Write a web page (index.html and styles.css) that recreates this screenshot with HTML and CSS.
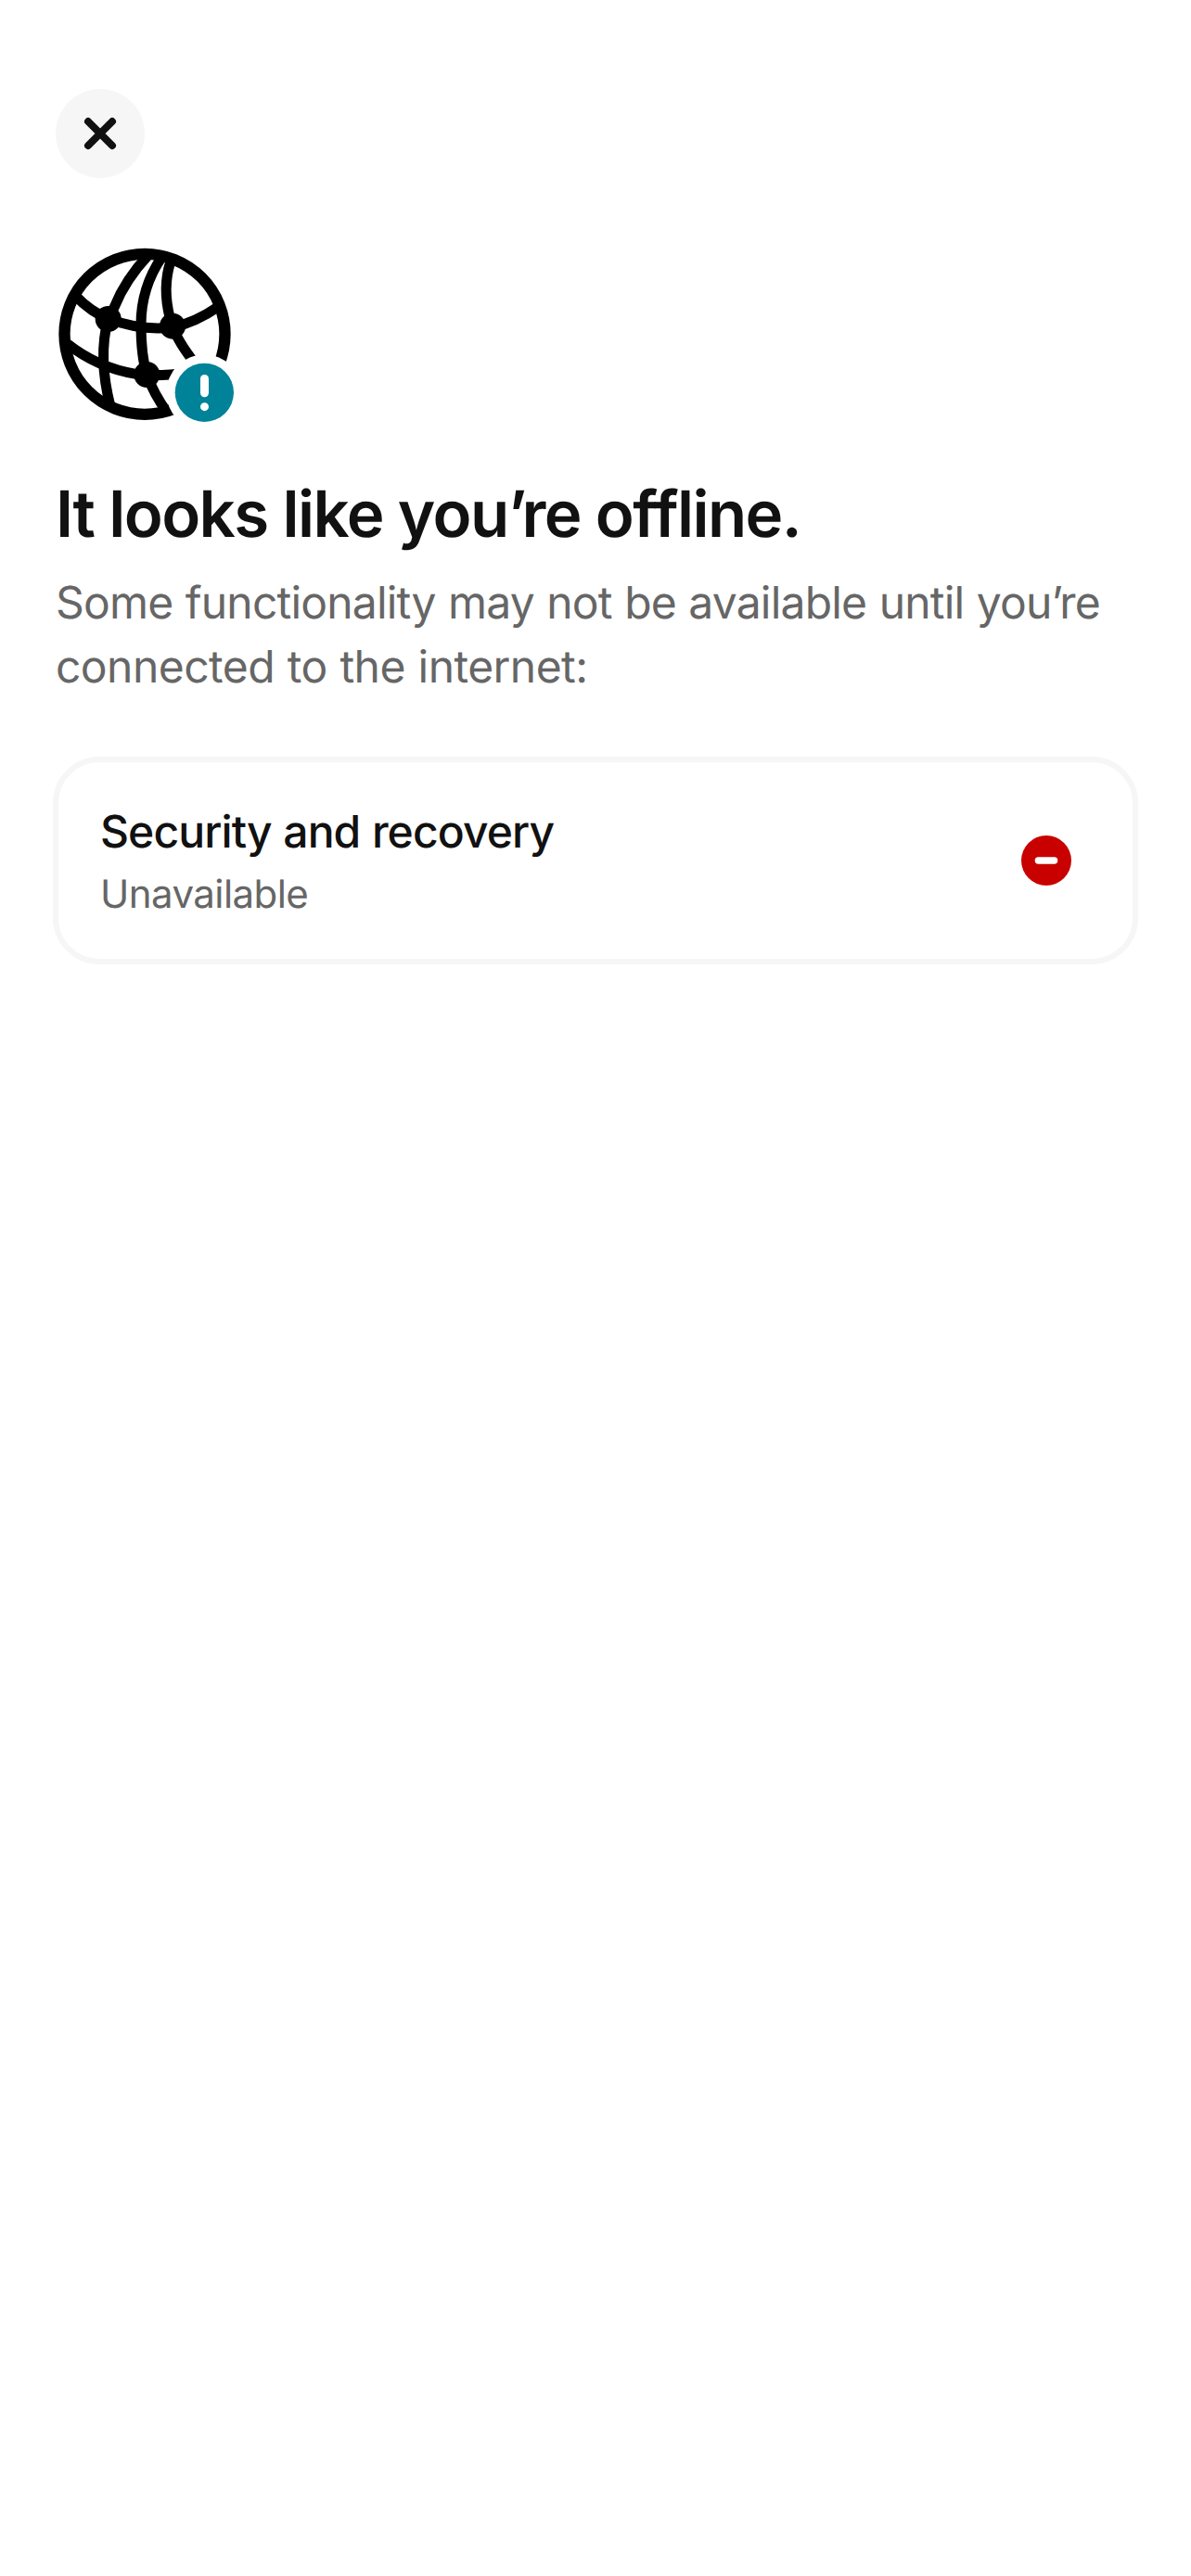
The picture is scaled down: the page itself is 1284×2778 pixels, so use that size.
FILE: index.html
```html
<!DOCTYPE html>
<html lang="en">
<head>
<meta charset="utf-8">
<title>Offline</title>
<link rel="stylesheet" href="styles.css">
</head>
<body>
<main class="screen">
  <button class="close" aria-label="Close">
    <svg class="close-icon" viewBox="0 0 96 96"><path d="M35 35 61 61M61 35 35 61"/></svg>
  </button>
  <svg class="globe" viewBox="30 15 660 630" aria-hidden="true">
    <defs>
      <mask id="badge-gap" maskUnits="userSpaceOnUse" x="0" y="0" width="690" height="645">
        <rect width="690" height="645" fill="#fff"/>
        <circle cx="511" cy="505" r="123" fill="#000"/>
      </mask>
    </defs>
    <g mask="url(#badge-gap)">
      <g class="globe-lines">
        <circle class="rim" cx="318" cy="316" r="259.5"/>
        <path d="M330 60Q255 140 220 228L200 266Q166 390 207 550"/>
        <path d="M374 66Q306 165 306 285Q306 385 325 447Q345 505 392 572"/>
        <path d="M402 80Q374 165 400 265L408 290Q425 340 480 410"/>
        <path d="M92 190Q145 245 200 266Q305 306 408 294Q482 278 556 227"/>
        <path d="M65 345Q165 425 290 445L325 450Q370 450 430 445"/>
      </g>
      <circle cx="200" cy="267" r="42"/>
      <circle cx="408" cy="290" r="42"/>
      <circle cx="325" cy="447" r="42"/>
    </g>
    <circle class="badge" cx="511" cy="505" r="95"/>
    <rect class="mark" x="498" y="447" width="27" height="73" rx="13.5"/>
    <circle class="mark" cx="511.500" cy="551" r="13.500"/>
  </svg>
  <h1 class="title">It looks like you<span class="apostrophe">’</span>re offline.</h1>
  <p class="lead"><span class="lead-first">Some functionality may not be available until you<span class="apostrophe">’</span>re</span><br>connected to the internet:</p>
  <section class="card">
    <div class="card-text">
      <h2 class="card-title">Security and recovery</h2>
      <p class="card-status">Unavailable</p>
    </div>
    <svg class="status-icon" viewBox="0 0 54 54" aria-label="Unavailable"><circle cx="27" cy="27" r="27"/><rect x="14.700" y="23.300" width="24.600" height="7.400" rx="3.700"/></svg>
  </section>
</main>
</body>
</html>
```
FILE: styles.css
```css
* { box-sizing: border-box; }
body { margin: 0; background: #fff; color: #111; font-family: Inter, sans-serif; text-rendering: geometricPrecision; }
.screen { display: flex; flex-direction: column; align-items: flex-start; min-height: 2778px; padding: 96px 57px 0 60px; }
.close { width: 96px; height: 96px; padding: 0; border: 0; border-radius: 50%; background: #f6f6f6; }
.close-icon { display: block; width: 96px; height: 96px; fill: none; stroke: #111; stroke-width: 8; stroke-linecap: round; }
.globe { width: 220px; height: 210px; margin-top: 68px; }
.globe-lines { fill: none; stroke: #000; stroke-width: 33; }
.globe-lines .rim { stroke-width: 37; }
.badge { fill: #008299; }
.mark { fill: #fff; }
.title { margin: 39px 0 0; font-size: 69px; line-height: 90px; font-weight: 600; letter-spacing: -1.56px; }
.title .apostrophe { letter-spacing: -5.5px; }
.lead { margin: 16px 0 0; color: #666; font-size: 48px; line-height: 69px; white-space: nowrap; letter-spacing: -0.55px; word-spacing: 0.8px; }
.lead-first { letter-spacing: -0.8px; word-spacing: 0.7px; }
.lead .apostrophe { letter-spacing: -3.8px; }
.card { display: flex; align-items: center; justify-content: space-between; width: 1170px; height: 224px; margin: 63px 0 0 -3px; padding: 0 66px 0 45px; border: 6px solid #f6f6f6; border-radius: 50px; }
.card-title { margin: 0; font-size: 48px; line-height: 72px; font-weight: 500; letter-spacing: -0.9px; word-spacing: 0.6px; }
.card-status { margin: 0; color: #666; font-size: 42px; line-height: 63px; letter-spacing: -0.55px; }
.status-icon { width: 54px; height: 54px; fill: #c80000; }
.status-icon rect { fill: #fff; }
```
